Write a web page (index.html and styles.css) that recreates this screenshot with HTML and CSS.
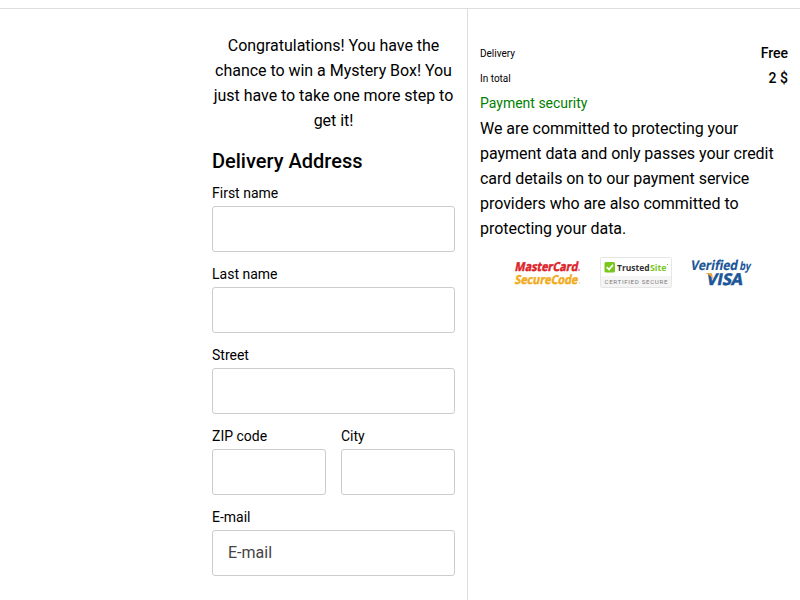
FILE: index.html
```
<!DOCTYPE html>
<html lang="en">
<head>
    <meta charset="UTF-8">
    <meta name="viewport" content="width=device-width, initial-scale=1.0">
    <title>Delivery Address</title>
    <link rel="stylesheet" href="styles.css">
</head>
<body>
    <main class="checkout">
        <form class="checkout-form">
            <p class="intro">Congratulations! You have the chance to win a Mystery Box! You just have to take one more step to get it!</p>
            <h1>Delivery Address</h1>

            <div class="form-group">
                <label for="first-name">First name</label>
                <input type="text" id="first-name">
            </div>
            <div class="form-group">
                <label for="last-name">Last name</label>
                <input type="text" id="last-name">
            </div>
            <div class="form-group">
                <label for="street">Street</label>
                <input type="text" id="street">
            </div>
            <div class="form-row">
                <div class="form-group">
                    <label for="zip">ZIP code</label>
                    <input type="text" id="zip">
                </div>
                <div class="form-group">
                    <label for="city">City</label>
                    <input type="text" id="city">
                </div>
            </div>
            <div class="form-group">
                <label for="email">E-mail</label>
                <input type="email" id="email" placeholder="E-mail">
            </div>
        </form>

        <aside class="summary">
            <div class="summary-row">
                <span>Delivery</span>
                <strong>Free</strong>
            </div>
            <div class="summary-row">
                <span>In total</span>
                <strong>2 $</strong>
            </div>
            <h2>Payment security</h2>
            <p>We are committed to protecting your payment data and only passes your credit card details on to our payment service providers who are also committed to protecting your data.</p>

            <div class="badges">
                <svg class="badge" width="72" height="31" viewBox="0 0 72 31">
                    <g class="badge-sans" font-size="12.4" stroke-width=".5">
                        <text transform="translate(4.5 13.7) skewX(-11)" textLength="63" lengthAdjust="spacingAndGlyphs" fill="#dd2229" stroke="#dd2229">MasterCard</text>
                        <text transform="translate(4.5 26.7) skewX(-11)" textLength="63" lengthAdjust="spacingAndGlyphs" fill="#f0ab1c" stroke="#f0ab1c">SecureCode</text>
                    </g>
                    <circle cx="69" cy="13" r=".8" fill="#dd2229"/>
                    <circle cx="69.6" cy="26" r=".6" fill="#f0ab1c"/>
                </svg>
                <svg class="badge" width="72" height="31" viewBox="0 0 72 31">
                    <rect x=".5" y=".5" width="71" height="30" rx="1" fill="#fff" stroke="#e6e6e6"/>
                    <rect x="1" y="19" width="70" height="11" fill="#f5f5f5"/>
                    <rect x="4.5" y="5" width="10.5" height="10.5" rx="1.5" fill="#78c71c"/>
                    <path d="M6.8 10.2l2.2 2.3 4-4.6" fill="none" stroke="#fff" stroke-width="1.7"/>
                    <g class="badge-sans" font-size="9.6">
                        <text x="17" y="14" textLength="32.5" lengthAdjust="spacingAndGlyphs" fill="#333">Trusted</text>
                        <text x="50" y="14" textLength="16.5" lengthAdjust="spacingAndGlyphs" fill="#78c71c">Site</text>
                    </g>
                    <circle cx="67.5" cy="7.5" r=".6" fill="#78c71c"/>
                    <text class="badge-caps" x="4.5" y="26.8" font-size="6.2" textLength="63" fill="#7c7c7c">CERTIFIED SECURE</text>
                </svg>
                <svg class="badge" width="72" height="31" viewBox="0 0 72 31">
                    <g class="badge-sans" fill="#1a5598" stroke="#1a5598">
                        <text transform="translate(.2 13.3) skewX(-11)" font-size="13.4" textLength="47" lengthAdjust="spacingAndGlyphs" stroke-width=".2">Verified</text>
                        <text transform="translate(49.2 13.3) skewX(-11)" font-size="11.5" textLength="11" lengthAdjust="spacingAndGlyphs" stroke-width=".1">by</text>
                        <text transform="translate(16 28) skewX(-11)" font-size="16.2" textLength="36" lengthAdjust="spacingAndGlyphs" stroke-width=".6">VISA</text>
                    </g>
                    <path d="M15.5 16h5q1.4 0 1.7 1.4l.9 5.2q-2.2-4.6-7.6-6.6z" fill="#eaa83c"/>
                </svg>
            </div>
        </aside>
    </main>
</body>
</html>
```

FILE: styles.css
```
* {
    box-sizing: border-box;
}
body {
    margin: 8px 0 0;
    font-family: Roboto, Arial, sans-serif;
    font-size: 16px;
    line-height: 25px;
    color: #000;
    background-color: #fff;
}
.checkout {
    display: flex;
    min-height: 592px;
    border-top: 1px solid #ddd;
}
.checkout-form {
    width: 468px;
    padding: 24px 12px 0 212px;
    border-right: 1px solid #ddd;
}
.intro {
    margin: 0;
    text-align: center;
    letter-spacing: -0.03px;
}
h1 {
    margin: 13px 0 5px;
    font-size: 20px;
    font-weight: 500;
    line-height: 30px;
}
.form-row {
    display: flex;
    gap: 15px;
}
.form-group {
    flex: 1;
    min-width: 0;
    margin-bottom: 10px;
}
label {
    display: block;
    font-size: 14px;
}
input {
    display: block;
    width: 100%;
    height: 46px;
    padding: 0 15px 2px;
    border: 1px solid #ccc;
    border-radius: 3px;
    font-family: inherit;
    font-size: 16px;
}
input::placeholder {
    color: #444;
}
.summary {
    flex: 1;
    padding: 32px 12px 0;
}
.summary-row {
    display: flex;
    justify-content: space-between;
    font-size: 10px;
}
.summary-row strong {
    font-size: 14px;
    font-weight: 500;
}
.summary h2 {
    margin: 0;
    font-size: 14px;
    font-weight: 400;
    color: #008000; /* green */
}
.summary p {
    margin: 0;
    letter-spacing: -0.04px;
}
.badges {
    display: flex;
    justify-content: center;
    gap: 18px;
    margin-top: 16px;
    padding-left: 4px;
}
.badge {
    display: block;
    overflow: visible;
}
.badge-sans {
    font-family: "Open Sans", sans-serif;
    font-weight: 700;
}
.badge-caps {
    font-family: Roboto, sans-serif;
    font-weight: 400;
}
```
